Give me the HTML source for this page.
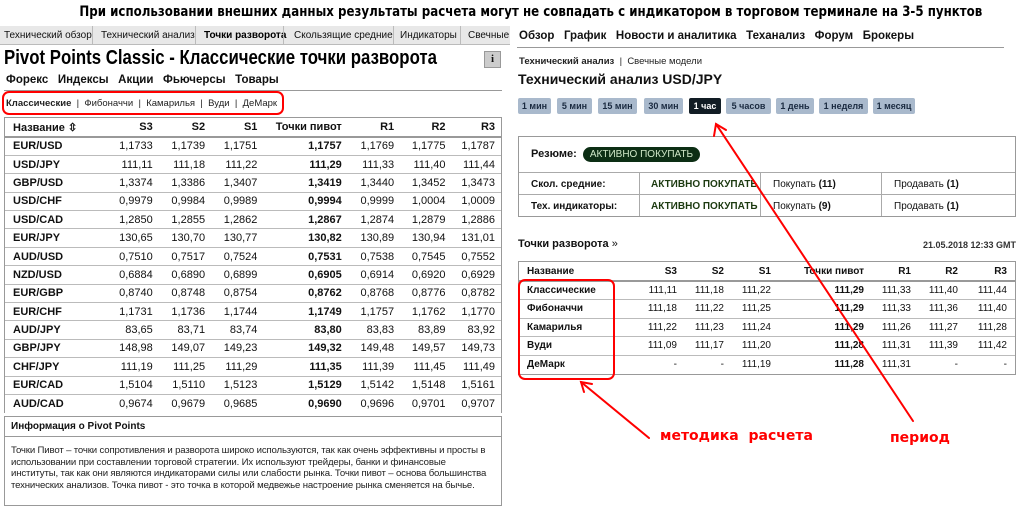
<!DOCTYPE html>
<html><head><meta charset="utf-8"><style>
*{margin:0;padding:0;box-sizing:border-box}
body{width:1024px;height:499px;background:#fff;position:relative;overflow:hidden;font-family:"Liberation Sans","Noto Sans CJK SC",sans-serif;color:#111}
.a{position:absolute;white-space:nowrap}
.cap{top:4px;left:0;width:1024px;text-align:center;font-family:"DejaVu Sans","Noto Sans CJK SC",sans-serif;font-size:14px;font-weight:bold;color:#000;transform:scaleX(0.845);transform-origin:center}
.tabs{top:26px;left:0;width:510px;height:19px;background:#e8e8e8;border-bottom:1px solid #bbb;font-size:10px;overflow:hidden}
.tabs span{position:absolute;top:4px}
.tabs i{position:absolute;top:0;width:1px;height:19px;background:#bbb}
table{border-collapse:collapse;font-size:11px}
td{height:18.4px;border-top:1px solid #bbb;text-align:right;padding:0}
td:first-child{text-align:left;padding-left:8px;font-weight:bold}
.b{font-weight:bold}
.r td{height:18.5px}
.btn{position:absolute;top:98px;height:16px;background:#a9b9cc;border-radius:2px;font-size:9px;font-weight:bold;line-height:16px;text-align:center;color:#1a2a40}
</style></head><body>
<div class="a cap">При использовании внешних данных результаты расчета могут не совпадать с индикатором в торговом терминале на 3-5 пунктов</div>
<div class="a tabs">
<span style="left:4px">Технический обзор</span><i style="left:92px"></i>
<span style="left:101px">Технический анализ</span><i style="left:195px"></i>
<span style="left:204px;font-weight:bold;color:#000">Точки разворота</span><i style="left:283px"></i>
<span style="left:294px">Скользящие средние</span><i style="left:393px"></i>
<span style="left:400px">Индикаторы</span><i style="left:460px"></i>
<span style="left:468px">Свечные</span>
</div>
<div class="a" style="top:47px;left:4px;font-size:20px;font-weight:bold;color:#000;transform:scaleX(0.84);transform-origin:left">Pivot Points Classic - Классические точки разворота</div>
<div class="a" style="top:51px;left:484px;width:17px;height:17px;background:#ccc;border:1px solid #999;font-size:11px;font-weight:bold;text-align:center;line-height:15px;font-family:'Liberation Serif',serif">i</div>
<div class="a" style="top:74px;left:6px;font-size:11.5px;font-weight:bold">Форекс&nbsp;&nbsp;&nbsp;Индексы&nbsp;&nbsp;&nbsp;Акции&nbsp;&nbsp;&nbsp;Фьючерсы&nbsp;&nbsp;&nbsp;Товары</div>
<div class="a" style="top:90px;left:4px;width:498px;height:1px;background:#999"></div>
<div class="a" style="top:98px;left:6px;font-size:9.5px;color:#222"><b>Классические</b> &nbsp;|&nbsp; Фибоначчи &nbsp;|&nbsp; Камарилья &nbsp;|&nbsp; Вуди &nbsp;|&nbsp; ДеМарк</div>
<div class="a" style="top:91px;left:2px;width:282px;height:24px;border:2px solid #f00;border-radius:7px"></div>
<div class="a" style="top:117px;left:4px;width:498px;border:1px solid #999;border-bottom:none">
<table style="width:496px">
<colgroup><col style="width:60px"><col style="width:77px"><col style="width:53px"><col style="width:53px"><col style="width:85px"><col style="width:53px"><col style="width:52px"><col style="width:56px"></colgroup>
<tr class="b"><td style="border:none;height:19px">Название ⇳</td><td style="border:none">S3</td><td style="border:none">S2</td><td style="border:none">S1</td><td style="border:none">Точки пивот</td><td style="border:none">R1</td><td style="border:none">R2</td><td style="border:none;padding-right:6px">R3</td></tr>
<tr><td style="border-top:2px solid #999">EUR/USD</td><td style="border-top:2px solid #999">1,1733</td><td style="border-top:2px solid #999">1,1739</td><td style="border-top:2px solid #999">1,1751</td><td class="b" style="border-top:2px solid #999">1,1757</td><td style="border-top:2px solid #999">1,1769</td><td style="border-top:2px solid #999">1,1775</td><td style="border-top:2px solid #999;padding-right:6px">1,1787</td></tr>
<tr><td>USD/JPY</td><td>111,11</td><td>111,18</td><td>111,22</td><td class="b">111,29</td><td>111,33</td><td>111,40</td><td style="padding-right:6px">111,44</td></tr>
<tr><td>GBP/USD</td><td>1,3374</td><td>1,3386</td><td>1,3407</td><td class="b">1,3419</td><td>1,3440</td><td>1,3452</td><td style="padding-right:6px">1,3473</td></tr>
<tr><td>USD/CHF</td><td>0,9979</td><td>0,9984</td><td>0,9989</td><td class="b">0,9994</td><td>0,9999</td><td>1,0004</td><td style="padding-right:6px">1,0009</td></tr>
<tr><td>USD/CAD</td><td>1,2850</td><td>1,2855</td><td>1,2862</td><td class="b">1,2867</td><td>1,2874</td><td>1,2879</td><td style="padding-right:6px">1,2886</td></tr>
<tr><td>EUR/JPY</td><td>130,65</td><td>130,70</td><td>130,77</td><td class="b">130,82</td><td>130,89</td><td>130,94</td><td style="padding-right:6px">131,01</td></tr>
<tr><td>AUD/USD</td><td>0,7510</td><td>0,7517</td><td>0,7524</td><td class="b">0,7531</td><td>0,7538</td><td>0,7545</td><td style="padding-right:6px">0,7552</td></tr>
<tr><td>NZD/USD</td><td>0,6884</td><td>0,6890</td><td>0,6899</td><td class="b">0,6905</td><td>0,6914</td><td>0,6920</td><td style="padding-right:6px">0,6929</td></tr>
<tr><td>EUR/GBP</td><td>0,8740</td><td>0,8748</td><td>0,8754</td><td class="b">0,8762</td><td>0,8768</td><td>0,8776</td><td style="padding-right:6px">0,8782</td></tr>
<tr><td>EUR/CHF</td><td>1,1731</td><td>1,1736</td><td>1,1744</td><td class="b">1,1749</td><td>1,1757</td><td>1,1762</td><td style="padding-right:6px">1,1770</td></tr>
<tr><td>AUD/JPY</td><td>83,65</td><td>83,71</td><td>83,74</td><td class="b">83,80</td><td>83,83</td><td>83,89</td><td style="padding-right:6px">83,92</td></tr>
<tr><td>GBP/JPY</td><td>148,98</td><td>149,07</td><td>149,23</td><td class="b">149,32</td><td>149,48</td><td>149,57</td><td style="padding-right:6px">149,73</td></tr>
<tr><td>CHF/JPY</td><td>111,19</td><td>111,25</td><td>111,29</td><td class="b">111,35</td><td>111,39</td><td>111,45</td><td style="padding-right:6px">111,49</td></tr>
<tr><td>EUR/CAD</td><td>1,5104</td><td>1,5110</td><td>1,5123</td><td class="b">1,5129</td><td>1,5142</td><td>1,5148</td><td style="padding-right:6px">1,5161</td></tr>
<tr><td>AUD/CAD</td><td>0,9674</td><td>0,9679</td><td>0,9685</td><td class="b">0,9690</td><td>0,9696</td><td>0,9701</td><td style="padding-right:6px">0,9707</td></tr>
</table></div>
<div class="a" style="top:416px;left:4px;width:498px;height:90px;border:1px solid #999">
<div style="height:20px;border-bottom:1px solid #999;font-size:10px;font-weight:bold;padding:4px 6px">Информация о Pivot Points</div>
<div style="font-size:9.6px;line-height:11.5px;padding:8px 6px;white-space:normal;color:#222;letter-spacing:-0.15px">Точки Пивот – точки сопротивления и разворота широко используются, так как очень эффективны и просты в использовании при составлении торговой стратегии. Их используют трейдеры, банки и финансовые институты, так как они являются индикаторами силы или слабости рынка. Точки пивот – основа большинства технических анализов. Точка пивот - это точка в которой медвежье настроение рынка сменяется на бычье.</div></div>

<!-- right -->
<div class="a" style="top:30px;left:519px;font-size:11.5px;font-weight:bold">Обзор&nbsp;&nbsp;&nbsp;График&nbsp;&nbsp;&nbsp;Новости и аналитика&nbsp;&nbsp;&nbsp;Теханализ&nbsp;&nbsp;&nbsp;Форум&nbsp;&nbsp;&nbsp;Брокеры</div>
<div class="a" style="top:47px;left:517px;width:487px;height:1px;background:#999"></div>
<div class="a" style="top:56px;left:519px;font-size:9.5px;color:#222"><b>Технический анализ</b> &nbsp;|&nbsp; Свечные модели</div>
<div class="a" style="top:71px;left:518px;font-size:14px;font-weight:bold">Технический анализ USD/JPY</div>
<div class="btn" style="left:518px;width:33px">1 мин</div>
<div class="btn" style="left:557px;width:35px">5 мин</div>
<div class="btn" style="left:598px;width:39px">15 мин</div>
<div class="btn" style="left:644px;width:39px">30 мин</div>
<div class="btn" style="left:689px;width:32px;background:#111c24;color:#fff">1 час</div>
<div class="btn" style="left:726px;width:45px">5 часов</div>
<div class="btn" style="left:776px;width:38px">1 день</div>
<div class="btn" style="left:819px;width:49px">1 неделя</div>
<div class="btn" style="left:873px;width:42px">1 месяц</div>
<div class="a" style="top:136px;left:518px;width:498px;height:81px;border:1px solid #999;font-size:10px">
<div class="a" style="top:11px;left:12px;font-size:11px;font-weight:bold">Резюме:</div>
<div class="a" style="top:10px;left:64px;width:117px;height:15px;background:#0c2e14;border-radius:8px;color:#d0e8c8;text-align:center;line-height:15px;font-size:10px">АКТИВНО ПОКУПАТЬ</div>
<div class="a" style="top:35px;left:0;width:496px;height:1px;background:#aaa"></div>
<div class="a" style="top:57px;left:0;width:496px;height:1px;background:#aaa"></div>
<div class="a" style="top:35px;left:120px;width:1px;height:44px;background:#aaa"></div>
<div class="a" style="top:35px;left:241px;width:1px;height:44px;background:#aaa"></div>
<div class="a" style="top:35px;left:362px;width:1px;height:44px;background:#aaa"></div>
<div class="a" style="top:42px;left:12px;font-weight:bold">Скол. средние:</div>
<div class="a" style="top:42px;left:132px;font-weight:bold;color:#1c3a10">АКТИВНО ПОКУПАТЬ</div>
<div class="a" style="top:42px;left:254px">Покупать <b>(11)</b></div>
<div class="a" style="top:42px;left:375px">Продавать <b>(1)</b></div>
<div class="a" style="top:64px;left:12px;font-weight:bold">Тех. индикаторы:</div>
<div class="a" style="top:64px;left:132px;font-weight:bold;color:#1c3a10">АКТИВНО ПОКУПАТЬ</div>
<div class="a" style="top:64px;left:254px">Покупать <b>(9)</b></div>
<div class="a" style="top:64px;left:375px">Продавать <b>(1)</b></div>
</div>
<div class="a" style="top:238px;left:518px;font-size:11px;font-weight:bold">Точки разворота <span style="font-weight:normal">»</span></div>
<div class="a" style="top:240px;right:8px;font-size:9px;font-weight:bold;color:#333">21.05.2018 12:33 GMT</div>
<div class="a" style="top:261px;left:518px;width:498px;border:1px solid #999">
<table class="r" style="width:496px;font-size:10px">
<colgroup><col style="width:90px"><col style="width:68px"><col style="width:47px"><col style="width:47px"><col style="width:93px"><col style="width:47px"><col style="width:47px"><col style="width:57px"></colgroup>
<tr class="b"><td style="border:none;height:19px">Название</td><td style="border:none">S3</td><td style="border:none">S2</td><td style="border:none">S1</td><td style="border:none">Точки пивот</td><td style="border:none">R1</td><td style="border:none">R2</td><td style="border:none;padding-right:8px">R3</td></tr>
<tr><td style="border-top:2px solid #999">Классические</td><td style="border-top:2px solid #999">111,11</td><td style="border-top:2px solid #999">111,18</td><td style="border-top:2px solid #999">111,22</td><td class="b" style="border-top:2px solid #999">111,29</td><td style="border-top:2px solid #999">111,33</td><td style="border-top:2px solid #999">111,40</td><td style="border-top:2px solid #999;padding-right:8px">111,44</td></tr>
<tr><td>Фибоначчи</td><td>111,18</td><td>111,22</td><td>111,25</td><td class="b">111,29</td><td>111,33</td><td>111,36</td><td style="padding-right:8px">111,40</td></tr>
<tr><td>Камарилья</td><td>111,22</td><td>111,23</td><td>111,24</td><td class="b">111,29</td><td>111,26</td><td>111,27</td><td style="padding-right:8px">111,28</td></tr>
<tr><td>Вуди</td><td>111,09</td><td>111,17</td><td>111,20</td><td class="b">111,28</td><td>111,31</td><td>111,39</td><td style="padding-right:8px">111,42</td></tr>
<tr><td>ДеМарк</td><td>-</td><td>-</td><td>111,19</td><td class="b">111,28</td><td>111,31</td><td>-</td><td style="padding-right:8px">-</td></tr>
</table></div>
<div class="a" style="top:279px;left:518px;width:97px;height:101px;border:2px solid #f00;border-radius:7px"></div>
<svg class="a" style="top:0;left:0" width="1024" height="499"><g stroke="#f00" stroke-width="2" fill="none" stroke-linecap="round">
<line x1="649" y1="438" x2="581" y2="382"/><polyline points="592,384 581,382 584,392"/>
<line x1="913" y1="421" x2="716" y2="124"/><polyline points="714,136 716,124 726,130"/></g></svg>
<div class="a" style="top:428px;left:660px;font-family:'DejaVu Sans',sans-serif;font-size:14px;font-weight:bold;color:#f00">методика&nbsp; расчета</div>
<div class="a" style="top:430px;left:890px;font-family:'DejaVu Sans',sans-serif;font-size:14px;font-weight:bold;color:#f00">период</div>
</body></html>
